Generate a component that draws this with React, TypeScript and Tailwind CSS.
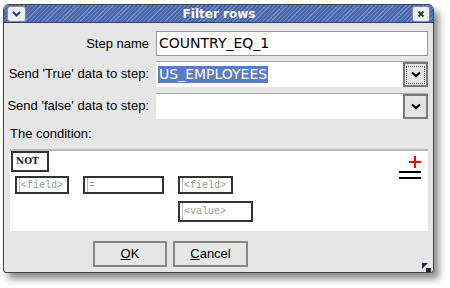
import React from "react";

const ChevronDown: React.FC = () => (
  <svg width="10" height="7" viewBox="0 0 10 7">
    <path d="M1 1.5 L5 5 L9 1.5" stroke="#000" strokeWidth="2.2" fill="none" />
  </svg>
);

const Box: React.FC<{ className?: string; children?: React.ReactNode }> = ({
  className = "",
  children,
}) => (
  <div
    className={`border-2 border-[#333] bg-white px-[2px] flex items-center font-['Liberation_Mono',monospace] text-[10px] text-[#999] ${className}`}
  >
    <div className="border-l border-[#bbb] h-full pl-[1px] flex items-center">{children}</div>
  </div>
);

const App: React.FC = () => {
  return (
    <div className="w-[450px] h-[288px] bg-white font-['Liberation_Sans',sans-serif] text-[13px] text-black">
      <div className="ml-[3px] mt-[4px] w-[431px] h-[269px] bg-[#e6e6e6] border border-[#444] rounded-t-[6px] rounded-b-[3px] shadow-[5px_6px_7px_rgba(0,0,0,0.45)] flex flex-col">
        {/* title bar */}
        <div className="h-[19px] rounded-t-[5px] border-b border-[#2c3f6a] bg-[repeating-linear-gradient(135deg,#4a68ab_0px,#4a68ab_2px,#6d89c6_2px,#6d89c6_3px)] flex items-center px-[3px]">
          <div className="w-[19px] h-[16px] rounded-[3px] border border-[#7d8aa5] bg-[#eef0f5] flex items-center justify-center">
            <svg width="9" height="6" viewBox="0 0 9 6">
              <path d="M1 1 L4.5 4.5 L8 1" stroke="#2a3f72" strokeWidth="2" fill="none" />
            </svg>
          </div>
          <div className="flex-1 text-center text-white font-bold text-[12px] leading-none font-['DejaVu_Sans',sans-serif]">
            Filter rows
          </div>
          <div className="w-[18px] h-[16px] rounded-[3px] border border-[#7d8aa5] bg-[#eef0f5] flex items-center justify-center">
            <svg width="8" height="8" viewBox="0 0 8 8">
              <path d="M1.5 1.5 L6.5 6.5 M6.5 1.5 L1.5 6.5" stroke="#333" strokeWidth="1.8" />
            </svg>
          </div>
        </div>

        {/* form */}
        <div className="flex flex-col pt-[8px] pr-[5px]">
          <div className="flex items-center h-[25px]">
            <div className="w-[145px] text-right whitespace-nowrap">Step name</div>
            <div className="ml-[7px] flex-1 h-[25px] bg-white border border-[#9a9a9a] flex items-center pl-[2px] text-[14px] font-['DejaVu_Sans',sans-serif]">
              COUNTRY_EQ_1
            </div>
          </div>
          <div className="flex items-center h-[26px] mt-[5px]">
            <div className="w-[145px] text-right whitespace-nowrap">Send 'True' data to step:</div>
            <div className="ml-[7px] flex-1 h-[26px] flex border-t border-[#aaa]">
              <div className="flex-1 bg-white flex items-center pl-[2px] text-[14px] font-['DejaVu_Sans',sans-serif]">
                <span className="bg-[#5a7cc0] text-white leading-[17px] px-[1px]">US_EMPLOYEES</span>
              </div>
              <div className="w-[25px] border-2 border-[#7a7a7a] bg-[#e4e4e4] flex items-center justify-center">
                <div className="w-[19px] h-[18px] border border-dotted border-[#666] flex items-center justify-center">
                  <ChevronDown />
                </div>
              </div>
            </div>
          </div>
          <div className="flex items-center h-[26px] mt-[6px]">
            <div className="w-[145px] text-right whitespace-nowrap">Send 'false' data to step:</div>
            <div className="ml-[7px] flex-1 h-[26px] flex border-t border-[#aaa]">
              <div className="flex-1 bg-white" />
              <div className="w-[25px] border-2 border-[#7a7a7a] bg-[#e4e4e4] flex items-center justify-center">
                <ChevronDown />
              </div>
            </div>
          </div>

          <div className="mt-[6px] pl-[6px] h-[18px] leading-[18px]">The condition:</div>

          <div className="ml-[6px] mt-[6px] h-[82px] bg-white border-t-2 border-[#bbb] relative flex">
            <div className="flex flex-col pl-[1px]">
              <div className="w-[38px] h-[21px] border-2 border-[#333] bg-white flex items-center pl-[3px] font-['DejaVu_Serif',serif] font-bold text-[9px] text-[#222]">
                NOT
              </div>
              <div className="flex mt-[4px] ml-[4px] items-start">
                <Box className="w-[54px] h-[18px]">&lt;field&gt;</Box>
                <Box className="ml-[14px] w-[81px] h-[18px] text-[#444]">=</Box>
                <div className="ml-[14px] flex flex-col">
                  <Box className="w-[55px] h-[18px]">&lt;field&gt;</Box>
                  <Box className="mt-[7px] w-[75px] h-[21px]">&lt;value&gt;</Box>
                </div>
              </div>
            </div>
            <div className="absolute right-[6px] top-[4px] w-[24px] h-[24px]">
              <svg width="24" height="24" viewBox="0 0 24 24">
                <path d="M17 1 V13 M11 7 H23" stroke="#ff0000" strokeWidth="2" />
                <path d="M1 17 H23 M1 23 H23" stroke="#000" strokeWidth="2" />
              </svg>
            </div>
          </div>

          <div className="flex mt-[10px] ml-[89px] gap-[6px]">
            <button className="w-[74px] h-[26px] border-2 border-[#888] bg-[#e6e6e6] text-[13px]">
              <span className="underline">O</span>K
            </button>
            <button className="w-[75px] h-[26px] border-2 border-[#888] bg-[#e6e6e6] text-[13px]">
              <span className="underline">C</span>ancel
            </button>
          </div>
          <div className="flex justify-end mt-[-4px] mr-[-4px]">
            <svg width="10" height="9" viewBox="0 0 10 9">
              <path d="M0 0 H6 L0 6 Z" fill="#1a2a55" />
              <path d="M4 5 H9 V9 H4 Z" fill="#222" />
            </svg>
          </div>
        </div>
      </div>
    </div>
  );
};

export default App;
